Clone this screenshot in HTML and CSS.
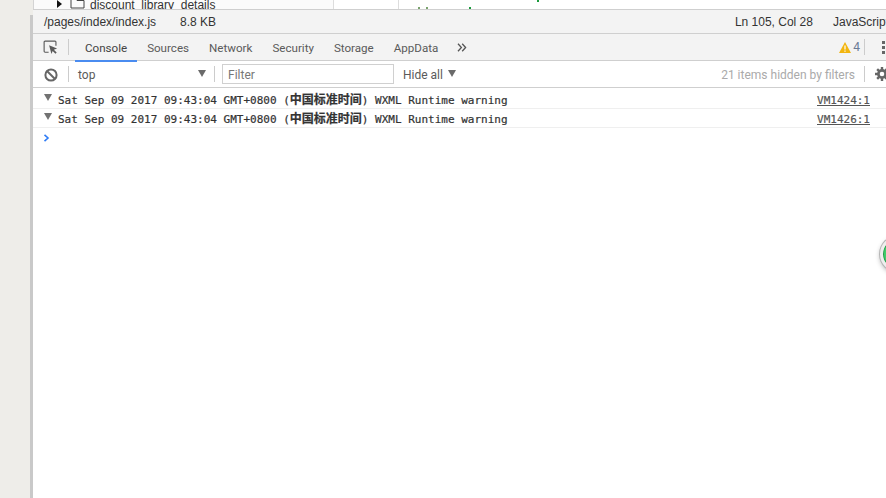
FILE: index.html
```html
<!DOCTYPE html>
<html lang="en">

<head>
    <meta charset="UTF-8">
    <meta name="viewport" content="width=device-width, initial-scale=1.0">
    <title>Console</title>
    <link rel="stylesheet" href="styles.css">
</head>

<body>
    <main>
        <div class="gutter">
            <div class="gutter-edge"></div>
        </div>
        <div class="devtools">
            <div class="file-tree">
                <div class="tree-list">
                    <span class="arrow"></span>
                    <svg class="folder" width="15" height="12" viewBox="0 0 15 12">
                        <path d="M1 11V1.500h4.500l1.500 2h7V11z" fill="none" stroke="#444" />
                    </svg>
                    <span class="tree-name">discount_library_details</span>
                </div>
                <div class="tree-gap"></div>
                <div class="tree-code">
                    <span class="code-bit one"></span>
                    <span class="code-bit two"></span>
                    <span class="code-bit three"></span>
                    <span class="code-bit four"></span>
                </div>
            </div>
            <div class="status-bar">
                <span class="path">/pages/index/index.js</span>
                <span class="size">8.8 KB</span>
                <span class="position">Ln 105, Col 28</span>
                <span class="language">JavaScript</span>
            </div>
            <div class="tabs">
                <button class="inspect">
                    <svg width="15" height="15" viewBox="0 0 16 16">
                        <path d="M6 13H2.200a1 1 0 0 1-1-1V2.200a1 1 0 0 1 1-1h10.600a1 1 0 0 1 1 1V6" fill="none" stroke="#5a5a5a" stroke-width="1.200" />
                        <path d="M6.500 5.500l8.500 3.600-3.400 1.300 3 3-1.300 1.300-3-3-1.300 3.300z" fill="#5a5a5a" />
                    </svg>
                </button>
                <span class="divider"></span>
                <a class="tab active">Console</a>
                <a class="tab">Sources</a>
                <a class="tab">Network</a>
                <a class="tab">Security</a>
                <a class="tab">Storage</a>
                <a class="tab">AppData</a>
                <svg class="more-tabs" width="10" height="9" viewBox="0 0 10 9">
                    <path d="M1 .8L4.400 4.500 1 8.200M5.200.8l3.400 3.700-3.400 3.700" fill="none" stroke="#555" stroke-width="1.300" />
                </svg>
                <span class="warnings">
                    <svg width="12" height="11" viewBox="0 0 12 11">
                        <path d="M6 0l6 11H0z" fill="#f2b50f" />
                        <path d="M5.400 3.500h1.200v4H5.400zM5.400 8.500h1.200v1.200H5.400z" fill="#fff" />
                    </svg>
                    <span class="warning-count">4</span>
                </span>
                <span class="divider"></span>
                <span class="kebab"><i></i><i></i><i></i></span>
            </div>
            <div class="filters">
                <svg class="clear" width="14" height="14" viewBox="0 0 14 14">
                    <circle cx="7" cy="7" r="5.600" fill="none" stroke="#666" stroke-width="2" />
                    <path d="M3 3l8 8" stroke="#666" stroke-width="2" />
                </svg>
                <span class="divider"></span>
                <div class="context">
                    <span>top</span>
                    <span class="caret"></span>
                </div>
                <span class="divider"></span>
                <input class="filter-input" placeholder="Filter" type="text">
                <div class="levels">
                    <span>Hide all</span>
                    <span class="caret"></span>
                </div>
                <span class="hidden-count">21 items hidden by filters</span>
                <span class="divider"></span>
                <svg class="settings" width="14" height="14" viewBox="0 0 14 14">
                    <circle cx="7" cy="7" r="3.600" fill="none" stroke="#666" stroke-width="2.600" />
                    <path d="M5.800 0h2.400v3H5.800zM5.800 11h2.400v3H5.800zM0 5.800h3v2.400H0zM11 5.800h3v2.400h-3zM1.300 3l1.700-1.700 2 2L3.300 5zM9 10.700l1.700-1.700 2 2-1.700 1.700zM3 12.700L1.300 11l2-2L5 10.700zM10.700 5L9 3.300l2-2L12.700 3z" fill="#666" />
                </svg>
            </div>
            <div class="messages">
                <div class="message">
                    <span class="expand"></span>
                    <span class="text">Sat Sep 09 2017 09:43:04 GMT+0800 (<span class="cjk">中国标准时间</span>) WXML Runtime warning</span>
                    <a class="source">VM1424:1</a>
                </div>
                <div class="message">
                    <span class="expand"></span>
                    <span class="text">Sat Sep 09 2017 09:43:04 GMT+0800 (<span class="cjk">中国标准时间</span>) WXML Runtime warning</span>
                    <a class="source">VM1426:1</a>
                </div>
                <div class="prompt">
                    <svg width="7" height="8" viewBox="0 0 7 8">
                        <path d="M1.500 .8L5 4 1.500 7.200" fill="none" stroke="#2f7cf6" stroke-width="1.600" />
                    </svg>
                </div>
            </div>
        </div>
    </main>
    <div class="float-button"></div>
</body>

</html>
```

FILE: styles.css
```css
:root {
    --bar-color: #f3f3f3;
    --border-color: #cfcfcf;
    --tab-text: #5a5a5a;
    --accent-color: #4a8cf0;
}

html,
body {
    margin: 0;
    height: 100%;
    overflow: hidden;
    background-color: #fff;
    font-family: Roboto, "Open Sans", sans-serif;
}

main {
    display: flex;
    height: 498px;
}

.gutter {
    width: 33px;
    flex: none;
    box-sizing: border-box;
    padding: 15px 0 0 30px;
    background-color: #eeede9;
}

.gutter-edge {
    height: 100%;
    background-color: #c9c9c9;
}

.devtools {
    flex: 1;
    min-width: 0;
    display: flex;
    flex-direction: column;
    overflow: hidden;
}

/* file tree, cut off at the top */
.file-tree {
    height: 9px;
    display: flex;
    overflow: hidden;
    background-color: #fff;
    flex: none;
}

.tree-list {
    width: 300px;
    flex: none;
    display: flex;
    align-items: flex-end;
    height: 9px;
    background-color: #fbfbfb;
    border-right: 1px solid #ddd;
    box-shadow: inset 1px 0 #d4d4d4;
    color: #333;
    font-size: 12px;
    line-height: 12px;
}

.tree-list .arrow {
    margin: 0 8px 1px 24px;
    border-left: 5px solid #111;
    border-top: 4px solid transparent;
    border-bottom: 4px solid transparent;
}

.tree-list .folder {
    margin-right: 5px;
    flex: none;
}

.tree-list .tree-name {
    margin-bottom: -2px;
    font-family: "Liberation Sans", Arial, sans-serif;
}

.tree-gap {
    width: 64px;
    flex: none;
    border-right: 1px solid #ddd;
}

.tree-code {
    flex: 1;
    position: relative;
}

.code-bit {
    position: absolute;
    bottom: 0;
    height: 2px;
    width: 2px;
    background-color: #7aa36d;
}

.code-bit.one { left: 19px; }
.code-bit.two { left: 27px; }
.code-bit.three { left: 70px; background-color: #1a9a3c; }
.code-bit.four { left: 138px; top: 0; bottom: auto; background-color: #1a9a3c; }

.status-bar {
    height: 23px;
    flex: none;
    display: flex;
    align-items: center;
    padding-left: 11px;
    background-color: var(--bar-color);
    border-top: 1px solid var(--border-color);
    border-bottom: 1px solid var(--border-color);
    font-family: "Liberation Sans", Arial, sans-serif;
    font-size: 12px;
    color: #333;
    white-space: nowrap;
}

.status-bar .size {
    margin-left: 24px;
}

.status-bar .position {
    margin-left: auto;
}

.status-bar .language {
    margin-left: 20px;
    margin-right: -3px;
}

.tabs {
    height: 26px;
    flex: none;
    display: flex;
    align-items: center;
    padding-left: 10px;
    background-color: var(--bar-color);
    border-bottom: 1px solid var(--border-color);
    font-size: 11.6px;
    color: var(--tab-text);
    white-space: nowrap;
}

.divider {
    width: 1px;
    height: 16px;
    flex: none;
    background-color: #ccc;
}

.inspect {
    width: 16px;
    height: 15px;
    padding: 0;
    border: none;
    background: none;
    display: flex;
}

.tabs .divider {
    margin-left: 9px;
}

.tab {
    padding: 0 10px;
    height: 26px;
    line-height: 28px;
}

.tab:first-of-type {
    margin-left: 6px;
}

.tab.active {
    color: #444;
    border-bottom: 2px solid var(--accent-color);
    height: 26px;
    box-sizing: content-box;
    margin-bottom: -1px;
}

.more-tabs {
    margin-left: 9px;
}

.warnings {
    margin-left: auto;
    display: flex;
    align-items: center;
    gap: 2px;
    font-size: 12px;
    color: #6b7b96;
}

.tabs .warnings + .divider {
    margin-left: 4px;
}

.kebab {
    margin-left: 17px;
    margin-right: 1px;
    display: flex;
    flex-direction: column;
    gap: 2px;
}

.kebab i {
    width: 3px;
    height: 3px;
    background-color: #666;
}

.filters {
    height: 26px;
    flex: none;
    display: flex;
    align-items: center;
    padding-left: 11px;
    border-bottom: 1px solid var(--border-color);
    font-size: 12px;
    color: var(--tab-text);
    white-space: nowrap;
}

.filters .clear {
    flex: none;
    margin-top: 2px;
}

.filters > .divider {
    margin-left: 10px;
}

.context {
    width: 137px;
    flex: none;
    display: flex;
    align-items: center;
    justify-content: space-between;
    padding: 2px 0 0 9px;
    box-sizing: border-box;
}

.filters .context + .divider {
    margin-left: 8px;
}

.caret {
    border-left: 4px solid transparent;
    border-right: 4px solid transparent;
    border-top: 7px solid #6a6a6a;
    margin-top: -4px;
}

.filter-input {
    width: 172px;
    height: 20px;
    box-sizing: border-box;
    margin-left: 7px;
    padding: 2px 5px 0;
    border: 1px solid #d0d0d0;
    font-family: inherit;
    font-size: 12px;
    color: #333;
    outline: none;
}

.filter-input::placeholder {
    color: #777;
}

.levels {
    margin-left: 9px;
    padding-top: 2px;
    display: flex;
    align-items: center;
    gap: 5px;
}

.hidden-count {
    margin-left: auto;
    padding-top: 2px;
    color: #aaa;
}

.filters .hidden-count + .divider {
    margin-left: 9px;
}

.settings {
    flex: none;
    margin-left: 10px;
    margin-right: -3px;
}

.messages {
    flex: 1;
    padding-top: 2px;
    font-family: "DejaVu Sans Mono", monospace;
    font-size: 11px;
    color: #333;
}

.message {
    height: 19px;
    box-sizing: border-box;
    display: flex;
    align-items: center;
    padding-left: 11px;
    padding-right: 16px;
    border-bottom: 1px solid #efefef;
    white-space: nowrap;
}

.expand {
    width: 0;
    flex: none;
    margin-top: -3px;
    margin-right: 6px;
    border-left: 4px solid transparent;
    border-right: 4px solid transparent;
    border-top: 7px solid #727272;
}

.message .text {
    margin-bottom: 2px;
    -webkit-text-stroke: .2px #333;
}

.cjk {
    font-family: "Noto Sans CJK SC", sans-serif;
    font-size: 12px;
    font-weight: bold;
}

.source {
    margin-left: auto;
    margin-top: 2px;
    color: #555;
    text-decoration: underline;
    -webkit-text-stroke: .2px #555;
}

.prompt {
    height: 20px;
    display: flex;
    align-items: center;
    padding-left: 10px;
}

.float-button {
    position: absolute;
    left: 880px;
    top: 236px;
    width: 36px;
    height: 36px;
    box-sizing: border-box;
    border-radius: 50%;
    background-color: #3fce68;
    border: 3px solid #eee;
    box-shadow: 0 0 0 1px #b5b5b5, 0 2px 5px rgba(0, 0, 0, .3), inset 0 0 0 1px #2a9a4e;
}
```
